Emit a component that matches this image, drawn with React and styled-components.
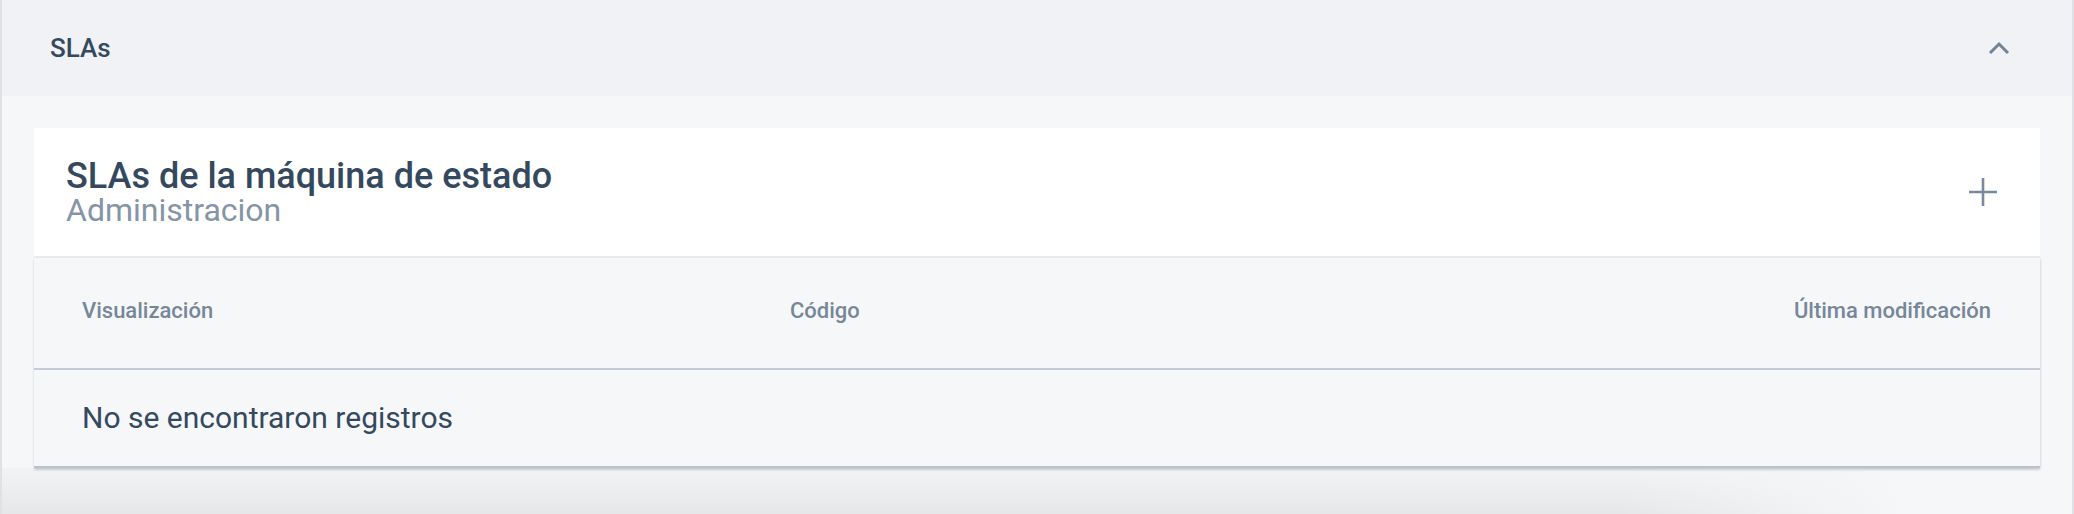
import React from "react";
import styled, {createGlobalStyle} from "styled-components";

const GlobalStyle = createGlobalStyle`
  html, body {
    margin: 0;
    padding: 0;
    background: #f6f7f9;
  }
  body {
    font-family: Roboto, "Noto Sans", "Liberation Sans", sans-serif;
    color: #34495e;
  }
`;

const Panel = styled.section`
  min-height: 514px;
  box-sizing: border-box;
  border-left: 2px solid #dfe1e7;
  border-right: 2px solid #dfe1e7;
  background: #f6f7f9;
  display: flex;
  flex-direction: column;
`;

const PanelHeader = styled.header`
  height: 96px;
  flex-shrink: 0;
  background: #f0f2f5;
  display: flex;
  align-items: center;
  justify-content: space-between;
  padding: 0 61px 0 48px;
`;

const PanelTitle = styled.h3`
  margin: 0;
  font-size: 26px;
  font-weight: 500;
  color: #34495e;
`;

const Toggle = styled.button`
  border: none;
  background: none;
  padding: 0;
  display: grid;
  place-items: center;
  color: #738396;
  cursor: pointer;
`;

const PanelBody = styled.div`
  flex: 1;
  padding: 32px 32px 46px;
  background:
    linear-gradient(to right, rgba(246, 247, 249, 0) 1620px, #f6f7f9 1900px) bottom / 100% 46px no-repeat,
    linear-gradient(to bottom, #f2f3f5, #e6e7e9) bottom / 100% 46px no-repeat,
    #f6f7f9;
`;

const Card = styled.div`
  display: flex;
  flex-direction: column;
`;

const CardHeader = styled.div`
  height: 130px;
  box-sizing: border-box;
  background: #ffffff;
  border-bottom: 2px solid #eceef2;
  display: flex;
  align-items: center;
  justify-content: space-between;
  padding: 0 42px 0 32px;
`;

const Heading = styled.div`
  display: flex;
  flex-direction: column;
`;

const Title = styled.h2`
  margin: 0;
  font-size: 36px;
  line-height: 36px;
  font-weight: 500;
  color: #34495e;
`;

const Subtitle = styled.span`
  font-size: 32px;
  line-height: 32px;
  font-weight: 400;
  color: #8594a6;
`;

const AddButton = styled.button`
  border: none;
  background: none;
  padding: 0;
  display: grid;
  place-items: center;
  color: #7a8a9c;
  cursor: pointer;
`;

const Table = styled.div`
  background: #f6f7f9;
  border-bottom: 2px solid #b9c1cd;
  box-shadow: 0 2px 2px rgba(60, 72, 92, 0.22), 1px 0 3px rgba(0, 0, 0, 0.06);
`;

const Row = styled.div`
  display: grid;
  grid-template-columns: 708px 1fr auto;
  align-items: center;
  box-sizing: border-box;
  height: ${p => p.$height}px;
  padding: 0 49px ${p => p.$lift || 0}px 48px;
  border-bottom: ${p => (p.$divider ? "2px solid #c4cbd6" : "none")};
`;

const HeadCell = styled.div`
  font-size: 22px;
  font-weight: 500;
  color: #76879a;
  text-align: ${p => p.$align || "left"};
`;

const EmptyText = styled.div`
  grid-column: 1 / -1;
  font-size: 30px;
  font-weight: 400;
  color: #34495e;
`;

const App = () => {
  return (
    <>
      <GlobalStyle/>
      <Panel>
        <PanelHeader>
          <PanelTitle>SLAs</PanelTitle>
          <Toggle aria-label="Colapsar">
            <svg width="24" height="18" viewBox="0 0 24 18" fill="none">
              <polyline points="3,14 12,5 21,14" stroke="currentColor" strokeWidth="3" strokeLinejoin="miter"/>
            </svg>
          </Toggle>
        </PanelHeader>
        <PanelBody>
          <Card>
            <CardHeader>
              <Heading>
                <Title>SLAs de la máquina de estado</Title>
                <Subtitle>Administracion</Subtitle>
              </Heading>
              <AddButton aria-label="Agregar">
                <svg width="30" height="30" viewBox="0 0 30 30" fill="none">
                  <path d="M15 1v28M1 15h28" stroke="currentColor" strokeWidth="2.6"/>
                </svg>
              </AddButton>
            </CardHeader>
            <Table>
              <Row $height={112} $lift={6} $divider>
                <HeadCell>Visualización</HeadCell>
                <HeadCell>Código</HeadCell>
                <HeadCell $align="right">Última modificación</HeadCell>
              </Row>
              <Row $height={96} $lift={2}>
                <EmptyText>No se encontraron registros</EmptyText>
              </Row>
            </Table>
          </Card>
        </PanelBody>
      </Panel>
    </>
  );
};

export default App;
